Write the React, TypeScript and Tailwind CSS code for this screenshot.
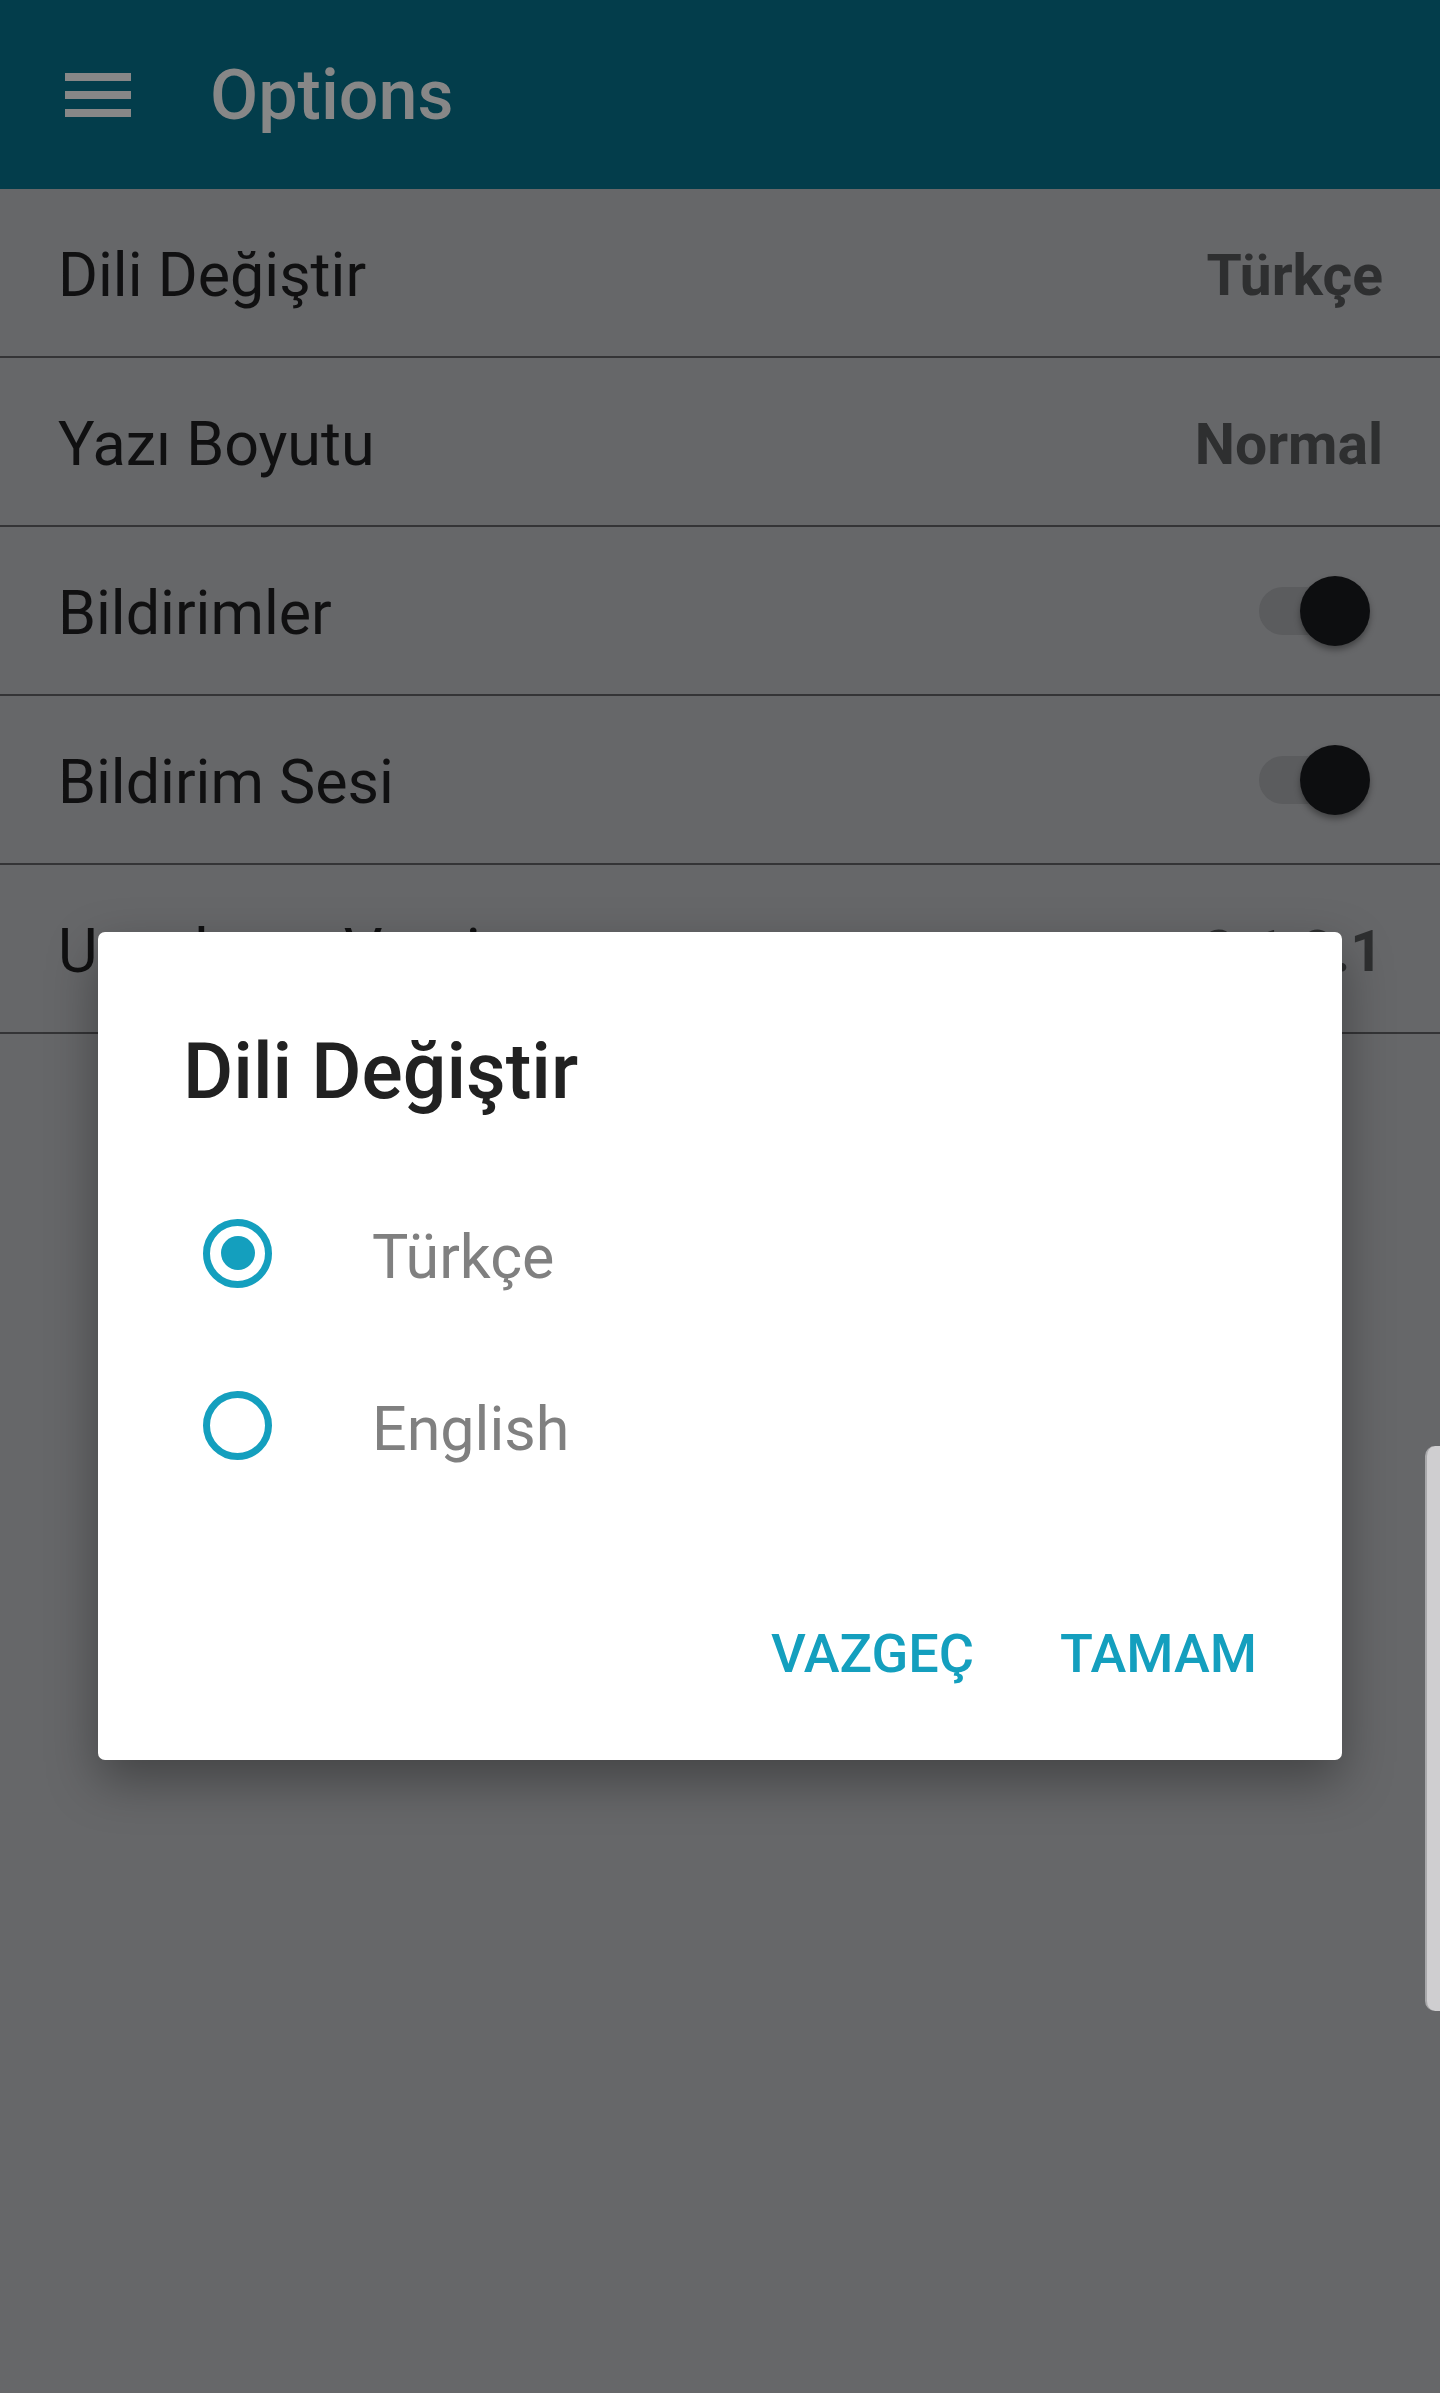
import React from "react";

const font = { fontFamily: "Roboto, 'Noto Sans', 'Liberation Sans', sans-serif" };

function Row({ label, value, toggle }: { label: string; value?: string; toggle?: boolean }) {
  return (
    <div className="flex flex-col">
      <div className="flex h-[167px] items-center justify-between pl-[58px] pr-[57px]">
        <span className="pt-[6px] text-[61px] leading-none text-[#101011]">{label}</span>
        {value && <span className="pt-[6px] text-[57px] font-bold leading-none text-[#2e2f30]">{value}</span>}
        {toggle && (
          <div className="relative mr-[13px] h-[70px] w-[111px]">
            <div className="absolute left-0 top-[11px] h-[48px] w-[105px] rounded-full bg-[#5b5c5e]" />
            <div className="absolute right-0 top-0 h-[70px] w-[70px] rounded-full bg-[#0d0e10] shadow-[0_4px_6px_rgba(0,0,0,0.35)]" />
          </div>
        )}
      </div>
      <div className="h-[2px] bg-[#343436]" />
    </div>
  );
}

function Radio({ checked, label }: { checked: boolean; label: string }) {
  return (
    <div className="flex h-[172px] items-center pl-[105px]">
      <div className="flex h-[69px] w-[69px] items-center justify-center rounded-full border-[7px] border-[#149fbe]">
        {checked && <div className="h-[34px] w-[34px] rounded-full bg-[#149fbe]" />}
      </div>
      <span className="ml-[100px] pt-[9px] text-[61px] leading-none text-[#808080]">{label}</span>
    </div>
  );
}

export default function App() {
  return (
    <div className="relative h-[2393px] w-full overflow-hidden bg-[#666769]" style={font}>
      <header className="flex h-[189px] items-center bg-[#033d4b] pl-[65px]">
        <div className="flex w-[66px] flex-col gap-[10px]">
          <div className="h-[8px] bg-[#878787]" />
          <div className="h-[8px] bg-[#878787]" />
          <div className="h-[8px] bg-[#878787]" />
        </div>
        <span className="ml-[79px] text-[70px] font-medium leading-none text-[#878787]">Options</span>
      </header>
      <div className="flex flex-col">
        <Row label="Dili Değiştir" value="Türkçe" />
        <Row label="Yazı Boyutu" value="Normal" />
        <Row label="Bildirimler" toggle />
        <Row label="Bildirim Sesi" toggle />
        <Row label="Uygulama Versiyonu" value="2.1.0.1" />
      </div>

      {/* right edge handle */}
      <div className="absolute right-0 top-[1446px] h-[565px] w-[15px] rounded-l-[10px] border-l-[2px] border-[#a9a9ab] bg-[#cfced0]" />

      {/* dialog */}
      <div className="absolute left-[98px] top-[932px] flex h-[828px] w-[1244px] flex-col rounded-[7px] bg-white pt-[102px] shadow-[0_20px_50px_rgba(0,0,0,0.35)]">
        <h2 className="pl-[85px] text-[77px] font-medium leading-none text-[#212121]">Dili Değiştir</h2>
        <div className="mt-[56px] flex flex-col">
          <Radio checked label="Türkçe" />
          <Radio checked={false} label="English" />
        </div>
        <div className="mt-[116px] flex justify-end gap-[86px] pr-[85px]">
          <span className="text-[54px] font-medium leading-none text-[#149fbe]">VAZGEÇ</span>
          <span className="text-[54px] font-medium leading-none text-[#149fbe]">TAMAM</span>
        </div>
      </div>
    </div>
  );
}
